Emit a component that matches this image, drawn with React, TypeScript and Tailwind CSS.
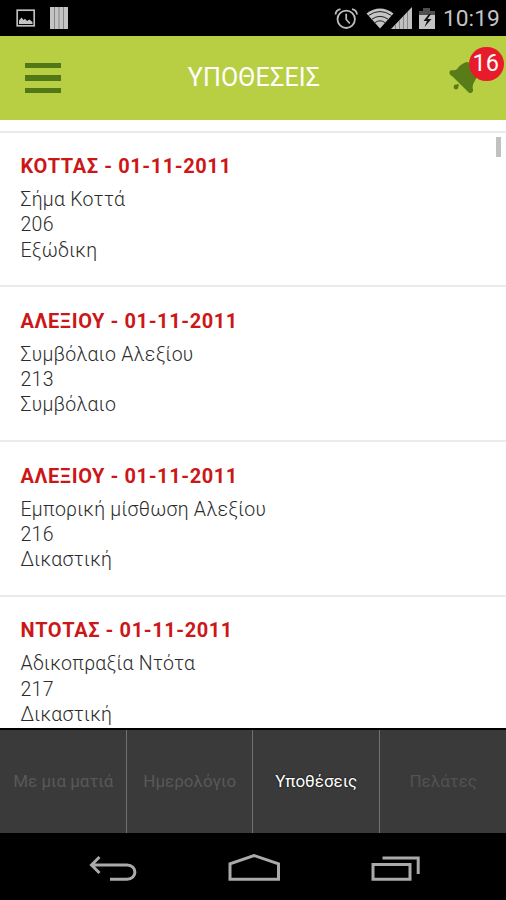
const cases = [
  { title: 'ΚΟΤΤΑΣ - 01-11-2011', name: 'Σήμα Κοττά', id: '206', kind: 'Εξώδικη' },
  { title: 'ΑΛΕΞΙΟΥ - 01-11-2011', name: 'Συμβόλαιο Αλεξίου', id: '213', kind: 'Συμβόλαιο' },
  { title: 'ΑΛΕΞΙΟΥ - 01-11-2011', name: 'Εμπορική μίσθωση Αλεξίου', id: '216', kind: 'Δικαστική' },
  { title: 'ΝΤΟΤΑΣ - 01-11-2011', name: 'Αδικοπραξία Ντότα', id: '217', kind: 'Δικαστική' },
];

const tabs = [
  { label: 'Με μια ματιά', style: 'text-[#585858]' },
  { label: 'Ημερολόγιο', style: 'text-[#585858]' },
  { label: 'Υποθέσεις', style: 'text-white [text-shadow:0_0_2px_#000]' },
  { label: 'Πελάτες', style: 'text-[#525252]' },
];

function StatusBar() {
  return (
    <div className="flex h-[36px] shrink-0 items-center bg-black pl-4 pr-[6px]">
      <svg width="20" height="20" viewBox="0 0 20 20" className="block">
        <rect x="1.2" y="2.2" width="17" height="15.6" fill="none" stroke="#bdbdbd" strokeWidth="1.7" />
        <path d="M3 16V12.5L5.5 9.5L7.5 12L9 10.8L11 13L13.5 11.5L16.5 14V16Z" fill="#c4c4c4" />
      </svg>
      <svg width="18" height="22" viewBox="0 0 18 22" className="ml-[14px] block">
        <rect width="18" height="22" fill="#c4c4c4" />
        <path d="M4.5 0V22M9 0V22M13.5 0V22" stroke="#858585" strokeWidth="1" />
      </svg>
      <svg width="102" height="26" viewBox="0 0 102 26" className="ml-auto block">
        <g fill="none" stroke="#bdbdbd">
          <circle cx="12.2" cy="14.3" r="8.7" strokeWidth="1.8" />
          <path d="M12.2 8.8V14.5L15.8 18.5" strokeWidth="1.7" />
          <path d="M1.5 9.5C1.8 6.5 3.2 4.8 6.5 4.2M23 9.5C22.7 6.5 21.3 4.8 18 4.2" strokeWidth="1.8" />
        </g>
        <path d="M32.5 8.5Q46 -1.5 59.5 8.5L46 23.5Z" fill="#c4c4c4" />
        <path d="M34.5 10.5Q46 2.5 57.5 10.5M37.8 14.2Q46 8.5 54.2 14.2M41 17.6Q46 14 51 17.6" fill="none" stroke="#222" strokeWidth="1" />
        <path d="M57 24L78 2V24Z" fill="#c0c0c0" />
        <path d="M61.5 19.5V24M65.5 15.3V24M69.5 11V24M73.5 7V24" stroke="#858585" strokeWidth="1" />
        <path d="M85 6H89V3H96V6H101V10H85Z" fill="#4f4f4f" />
        <path d="M85 10H101V24H85Z" fill="#c4c4c4" />
        <path d="M95 9L89.5 16H93L90.5 22L97.5 14H93.5L97 9Z" fill="#111" />
      </svg>
      <span className="ml-[7px] w-[57px] whitespace-nowrap pt-px text-[22.8px] leading-9 text-[#c4c4c4]">10:19</span>
    </div>
  );
}

function Header() {
  return (
    <header className="flex h-[84px] shrink-0 items-center bg-[#b8cf43] pl-[25px] pr-[2px]">
      <div className="flex w-9 flex-col gap-[7px]">
        <span className="h-[5.5px] bg-[#527716]" />
        <span className="h-[5.5px] bg-[#527716]" />
        <span className="h-[5.5px] bg-[#527716]" />
      </div>
      <h1 className="flex-1 whitespace-nowrap pr-[1px] text-center text-[25px] leading-8 tracking-[0.2px] text-white">ΥΠΟΘΕΣΕΙΣ</h1>
      <div className="relative h-[50px] w-[56px]">
        <svg width="34" height="36" viewBox="0 0 34 36" className="absolute left-0 top-[6px]">
          <path d="M3 11.2C0.5 12.5 1 15.8 4.5 17.5L20.5 33.2C22.4 35.2 25.6 33.5 25 30.5C23.8 26.5 26 22.5 31 15L20 3C15 3.8 12.5 6 9.5 9.5C7.5 11.8 5.2 11.4 3 11.2Z" fill="#587c17" />
          <path d="M10.5 25.5L8 28" stroke="#587c17" strokeWidth="2" />
          <circle cx="8" cy="28" r="2.4" fill="#587c17" />
        </svg>
        <span className="absolute left-[21px] top-[-6.5px] flex size-[34.5px] items-center justify-center rounded-full bg-[#e81b2b] pr-px text-[23.5px] text-white">16</span>
      </div>
    </header>
  );
}

function NavigationBar() {
  return (
    <nav className="flex h-[67px] shrink-0 items-start justify-between bg-black pl-[89px] pr-[85px] pt-5">
      <svg width="49" height="30" viewBox="0 0 49 30" fill="none" stroke="#aaa" strokeWidth="3">
        <path d="M10.5 4L2.5 12L10.5 20M3 12H38C48.5 12 48.5 26.3 38 26.3H21" />
      </svg>
      <svg width="53" height="30" viewBox="0 0 53 30" fill="none" stroke="#aaa" strokeWidth="3">
        <path d="M2 26.3V10.8L26 2.5L50.5 10.8V26.3Z" />
      </svg>
      <svg width="51" height="30" viewBox="0 0 51 30" fill="none" stroke="#aaa" strokeWidth="3">
        <path d="M3 11.5H40V26.3H3ZM12.5 5H48.2V21" />
      </svg>
    </nav>
  );
}

export default function App() {
  return (
    <div className="flex h-[900px] w-[506px] flex-col overflow-hidden bg-white font-[Roboto,sans-serif]">
      <StatusBar />
      <Header />
      <main className="relative min-h-0 flex-1 overflow-hidden pt-[10.5px]">
        {cases.map((item, i) => (
          <article key={i} className="h-[154.8px] border-t-2 border-[#ebebeb] pl-[20.5px] pt-[19.5px]">
            <h2 className="whitespace-nowrap text-[20px] font-bold leading-[28px] tracking-[0.57px] text-[#cc1719]">{item.title}</h2>
            <div className="mt-[7px] whitespace-nowrap text-[19.5px] font-light leading-[25.3px] tracking-[0.27px] text-[#2c2c2c]">
              <p>{item.name}</p>
              <p>{item.id}</p>
              <p>{item.kind}</p>
            </div>
          </article>
        ))}
        <div className="absolute right-[5px] top-[17px] h-5 w-[5px] bg-[#c1c1c1]" />
      </main>
      <div className="grid h-[105px] shrink-0 grid-cols-4 border-t-2 border-black bg-[#3a3a3a]">
        {tabs.map((tab) => (
          <div key={tab.label} className="flex items-center justify-center border-r border-[#707070] pl-px last:border-r-0">
            <span className={`whitespace-nowrap text-[17px] ${tab.style}`}>{tab.label}</span>
          </div>
        ))}
      </div>
      <NavigationBar />
    </div>
  );
}
